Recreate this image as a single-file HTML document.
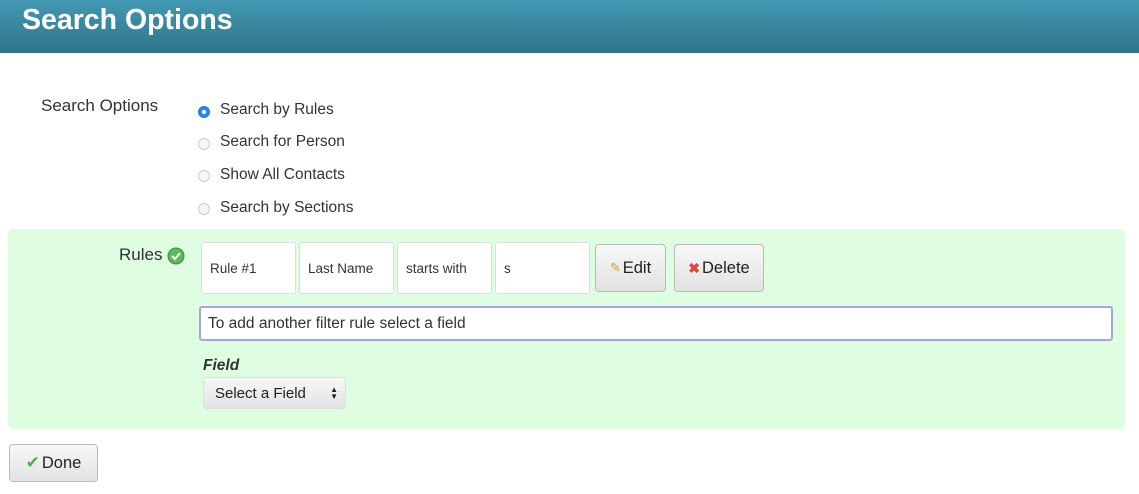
<!DOCTYPE html>
<html><head><style>
*{box-sizing:border-box;margin:0;padding:0}
body{width:1139px;height:494px;background:#fff;font-family:"Liberation Sans",sans-serif;color:#333;position:relative;overflow:hidden}
.hdr{position:absolute;left:0;top:0;width:1139px;height:53px;background:linear-gradient(#4399b3,#2f7489);}
.hdr h1{position:absolute;left:22px;top:4px;font-size:28.5px;font-weight:bold;color:#fff}
.a{position:absolute;white-space:nowrap}
.lbl{font-size:17px}
.opt{font-size:15.5px;left:220px}
.rad{position:absolute;left:198px;width:12px;height:12px;border-radius:50%;border:1px solid #ccc;background:#f6f6f6}
.rad.on{background:#2f86ec;border-color:#2a7ad8}
.rad.on:after{content:"";position:absolute;left:3px;top:3px;width:4px;height:4px;border-radius:50%;background:#fff}
.panel{position:absolute;left:8px;top:229px;width:1117px;height:200px;background:#dffde0;border-radius:5px}
.box{position:absolute;top:242px;width:95px;height:52px;background:#fff;border:1px solid #ddd;border-radius:3px;font-size:13.5px;padding:18px 0 0 8px}
.btn{position:absolute;background:linear-gradient(#f8f8f8,#e2e2e2);border:1px solid #bbb;border-radius:4px;font-size:16.5px;color:#222;display:flex;align-items:center;justify-content:center;gap:2px}
</style></head><body>
<div class="hdr"><h1>Search Options</h1></div>
<div class="a lbl" style="left:41px;top:96px">Search Options</div>
<div class="rad on" style="top:106px"></div><div class="a opt" style="top:101px">Search by Rules</div>
<div class="rad" style="top:138px"></div><div class="a opt" style="top:133px">Search for Person</div>
<div class="rad" style="top:170px"></div><div class="a opt" style="top:166px">Show All Contacts</div>
<div class="rad" style="top:203px"></div><div class="a opt" style="top:199px">Search by Sections</div>
<div class="panel"></div>
<div class="a lbl" style="left:119px;top:245px">Rules</div>
<svg class="a" style="left:167px;top:247px" width="18" height="18"><circle cx="9" cy="9" r="8" fill="#5cb85c" stroke="#3d8f3d"/><path d="M5 9l3 3 5-6" stroke="#fff" stroke-width="2" fill="none"/></svg>
<div class="box" style="left:201px">Rule #1</div>
<div class="box" style="left:299px">Last Name</div>
<div class="box" style="left:397px">starts with</div>
<div class="box" style="left:495px">s</div>
<div class="btn" style="left:595px;top:244px;width:71px;height:48px"><span style="color:#d9a520;font-size:13px">✎</span>Edit</div>
<div class="btn" style="left:674px;top:244px;width:90px;height:48px"><span style="color:#e0443a;font-size:14px;font-weight:bold">✖</span>Delete</div>
<div class="a" style="left:199px;top:306px;width:914px;height:35px;background:#fff;border:2px solid #a3a6e0;border-radius:3px;font-size:15.5px;padding:7px 0 0 7px">To add another filter rule select a field</div>
<div class="a" style="left:203px;top:357px;font-size:15.5px;font-weight:bold;font-style:italic">Field</div>
<div class="btn" style="left:203px;top:377px;width:143px;height:32px;font-size:15px;justify-content:flex-start;padding-left:11px;border-color:#ddd">Select a Field<span style="position:absolute;right:7px;font-size:8px;line-height:7px">▲<br>▼</span></div>
<div class="btn" style="left:9px;top:444px;width:89px;height:38px"><span style="color:#4caf50;font-size:17px">✔</span>Done</div>
</body></html>
